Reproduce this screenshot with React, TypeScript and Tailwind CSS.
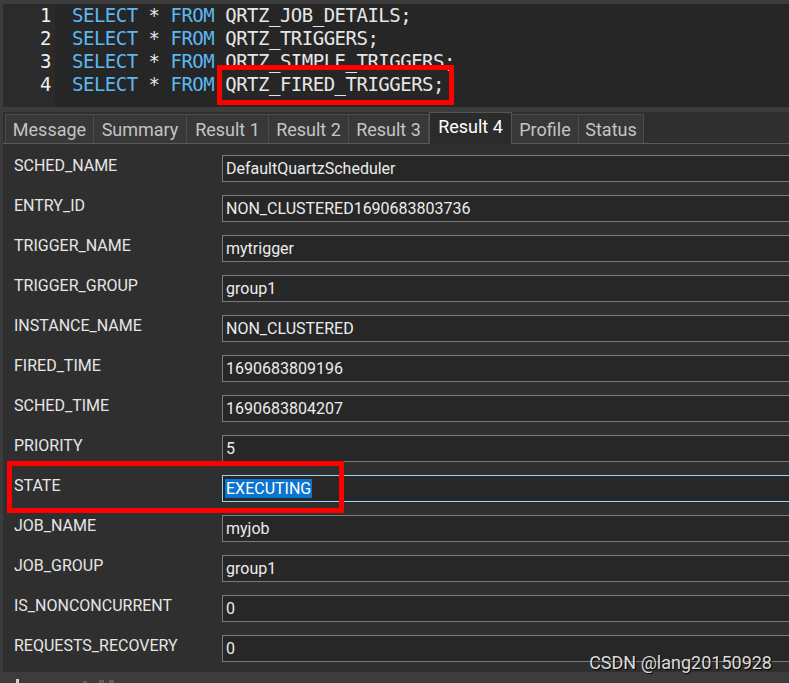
import React from "react";

type Row = { name: string; value: string; selected?: boolean };

const rows: Row[] = [
  { name: "SCHED_NAME", value: "DefaultQuartzScheduler" },
  { name: "ENTRY_ID", value: "NON_CLUSTERED1690683803736" },
  { name: "TRIGGER_NAME", value: "mytrigger" },
  { name: "TRIGGER_GROUP", value: "group1" },
  { name: "INSTANCE_NAME", value: "NON_CLUSTERED" },
  { name: "FIRED_TIME", value: "1690683809196" },
  { name: "SCHED_TIME", value: "1690683804207" },
  { name: "PRIORITY", value: "5" },
  { name: "STATE", value: "EXECUTING", selected: true },
  { name: "JOB_NAME", value: "myjob" },
  { name: "JOB_GROUP", value: "group1" },
  { name: "IS_NONCONCURRENT", value: "0" },
  { name: "REQUESTS_RECOVERY", value: "0" },
];

const tables = [
  "QRTZ_JOB_DETAILS;",
  "QRTZ_TRIGGERS;",
  "QRTZ_SIMPLE_TRIGGERS;",
  "QRTZ_FIRED_TRIGGERS;",
];

const tabs = [
  { label: "Message", w: "w-[89px]" },
  { label: "Summary", w: "w-[93px]" },
  { label: "Result 1", w: "w-[82px]" },
  { label: "Result 2", w: "w-[80px]" },
  { label: "Result 3", w: "w-[80px]" },
  { label: "Result 4", w: "w-[83px]", active: true },
  { label: "Profile", w: "w-[67px]" },
  { label: "Status", w: "w-[65px]" },
];

export default function App() {
  return (
    <div className="relative h-[683px] w-[789px] overflow-hidden bg-[#3c3c3c] pl-[3px] pt-[4px] font-['Roboto',sans-serif]">
      {/* editor */}
      <div className="flex h-[103px] font-['DejaVu_Sans_Mono',monospace] text-[19px] leading-[23px] tracking-[-0.5px]">
        <div className="w-[52px] bg-[#2b2b2b] pr-[4px] text-right text-[#f0f0f0]">
          {tables.map((_, i) => (
            <div key={i}>{i + 1}</div>
          ))}
        </div>
        <div className="flex-1 bg-[#262626] pl-[17px] text-[#e6e6e6]">
          {tables.map((t) => (
            <div key={t} className="whitespace-pre">
              <span className="text-[#5cb8f2]">SELECT</span> *{" "}
              <span className="text-[#5cb8f2]">FROM</span> {t}
            </div>
          ))}
        </div>
      </div>

      {/* tabs */}
      <div className="mt-[5px] flex h-[32px] items-end border-b border-[#5a5a5a] bg-[#2f2f2f] pl-[2px] text-[18px]">
        {tabs.map((t) =>
          t.active ? (
            <div
              key={t.label}
              className={`${t.w} -mb-px flex h-[32px] items-center justify-center border border-b-0 border-[#555555] bg-[#2b2b2b] pb-[4px] text-white`}
            >
              {t.label}
            </div>
          ) : (
            <div
              key={t.label}
              className={`${t.w} flex h-[29px] items-center justify-center border border-b-0 border-l-0 border-[#4b4b4b] bg-[#383838] text-[#c4c4c4] first:border-l`}
            >
              {t.label}
            </div>
          )
        )}
      </div>

      {/* record view */}
      <div className="flex h-[528px] flex-col gap-[13px] bg-[#2f2f2f] pt-[11px] text-[16px]">
        {rows.map((r) => (
          <div key={r.name} className="flex h-[27px]">
            <div className="w-[219px] pl-[11px] leading-[21px] text-[#e6e6e6]">{r.name}</div>
            <div
              className={`flex-1 border border-r-0 bg-[#272727] pl-[2px] leading-[25px] text-[#ececec] ${
                r.selected ? "border-[#9fd3f5]" : "border-[#7a7a7a]"
              }`}
            >
              {r.selected ? (
                <span className="bg-[#0a74d0] pl-px pr-[1px] text-white">{r.value}</span>
              ) : (
                <span className="pl-px">{r.value}</span>
              )}
            </div>
          </div>
        ))}
      </div>

      {/* status strip marks */}
      <div className="flex h-[11px] items-end pl-[13px]">
        <div className="h-[4px] w-[3px] bg-[#cfcfcf]" />
        <div className="ml-[64px] h-[2px] w-[4px] bg-[#5e5e5e]" />
        <div className="ml-[12px] h-[3px] w-[5px] bg-[#5e5e5e]" />
        <div className="ml-[5px] h-[3px] w-[5px] bg-[#5e5e5e]" />
      </div>

      {/* red highlight boxes */}
      <div className="absolute left-[217px] top-[65px] h-[40px] w-[237px] border-[5px] border-[#ff0000]" />
      <div className="absolute left-[7px] top-[461px] h-[52px] w-[337px] border-[5px] border-[#ff0000]" />

      {/* watermark */}
      <div className="absolute right-[17px] top-[651px] text-[18px] leading-[24px] text-[#dcdcdc] [text-shadow:1px_1px_1px_#000]">
        CSDN @lang20150928
      </div>
    </div>
  );
}
